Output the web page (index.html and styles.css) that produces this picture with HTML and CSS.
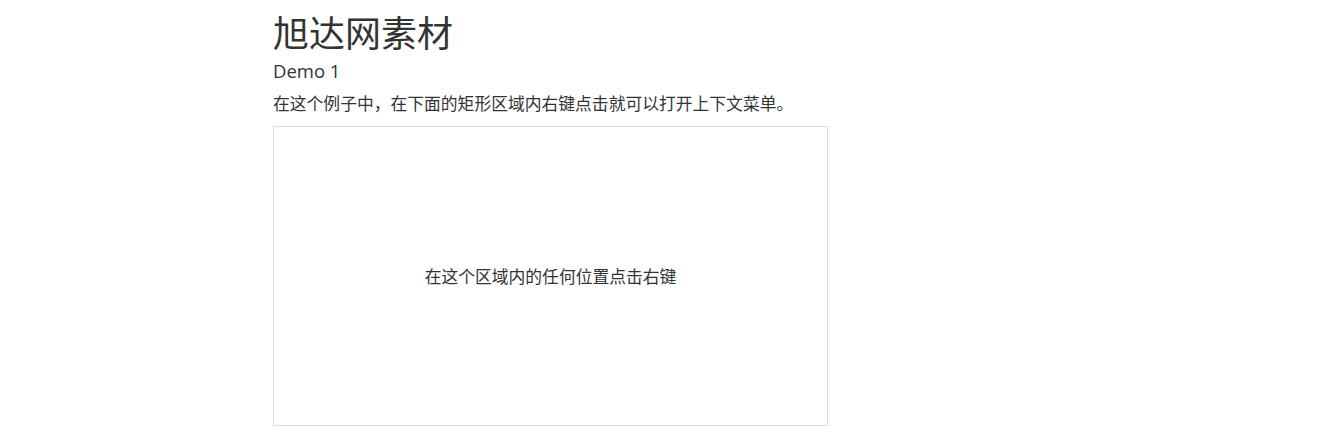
FILE: index.html
```html
<!DOCTYPE html>
<html lang="zh">
<head>
<meta charset="utf-8">
<title>旭达网素材</title>
<link rel="stylesheet" href="styles.css">
</head>
<body>
<div class="container">
  <h1 class="title">旭达网素材</h1>
  <h2 class="subtitle">Demo 1</h2>
  <p class="desc">在这个例子中，在下面的矩形区域内右键点击就可以打开上下文菜单。</p>
  <div class="area">在这个区域内的任何位置点击右键</div>
</div>
</body>
</html>
```

FILE: styles.css
```css
html, body {
  margin: 0;
  padding: 0;
  background: #fff;
}
body {
  font-family: "Open Sans", "Noto Sans CJK SC", sans-serif;
  color: #333;
}
.container {
  padding-left: 273px;
}
.title {
  margin: 14px 0 0;
  font-size: 36px;
  line-height: 40px;
  font-weight: 400;
}
.subtitle {
  margin: 5px 0 0;
  font-size: 18.5px;
  line-height: 24px;
  font-weight: 400;
}
.desc {
  margin: 8px 0 0;
  font-size: 16.8px;
  line-height: 26px;
}
.area {
  box-sizing: border-box;
  width: 555px;
  height: 300px;
  margin-top: 9px;
  border: 1px solid #ddd;
  display: flex;
  align-items: center;
  justify-content: center;
  font-size: 16.8px;
}
```
